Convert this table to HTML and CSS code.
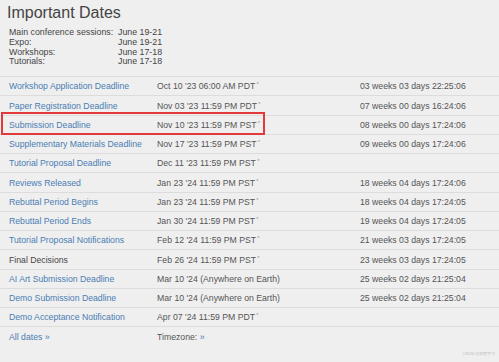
FILE: index.html
```html
<!DOCTYPE html>
<html>
<head>
<meta charset="utf-8">
<link rel="stylesheet" href="styles.css">
</head>
<body>
<h1 class="title">Important Dates</h1>
<div class="summary">
  <div class="sum-row"><span class="sum-label">Main conference sessions:</span><span>June 19-21</span></div>
  <div class="sum-row"><span class="sum-label">Expo:</span><span>June 19-21</span></div>
  <div class="sum-row"><span class="sum-label">Workshops:</span><span>June 17-18</span></div>
  <div class="sum-row"><span class="sum-label">Tutorials:</span><span>June 17-18</span></div>
</div>
<table class="dates">
  <tr><td class="name"><a>Workshop Application Deadline</a></td><td class="when">Oct 10 '23 06:00 AM PDT <sup>*</sup></td><td class="left">03 weeks 03 days 22:25:06</td></tr>
  <tr><td class="name"><a>Paper Registration Deadline</a></td><td class="when">Nov 03 '23 11:59 PM PDT <sup>*</sup></td><td class="left">07 weeks 00 days 16:24:06</td></tr>
  <tr class="marked"><td class="name"><a>Submission Deadline</a><span class="highlight"></span></td><td class="when">Nov 10 '23 11:59 PM PST <sup>*</sup></td><td class="left">08 weeks 00 days 17:24:06</td></tr>
  <tr><td class="name"><a>Supplementary Materials Deadline</a></td><td class="when">Nov 17 '23 11:59 PM PST <sup>*</sup></td><td class="left">09 weeks 00 days 17:24:06</td></tr>
  <tr><td class="name"><a>Tutorial Proposal Deadline</a></td><td class="when">Dec 11 '23 11:59 PM PST <sup>*</sup></td><td class="left"></td></tr>
  <tr><td class="name"><a>Reviews Released</a></td><td class="when">Jan 23 '24 11:59 PM PST <sup>*</sup></td><td class="left">18 weeks 04 days 17:24:06</td></tr>
  <tr><td class="name"><a>Rebuttal Period Begins</a></td><td class="when">Jan 23 '24 11:59 PM PST <sup>*</sup></td><td class="left">18 weeks 04 days 17:24:05</td></tr>
  <tr><td class="name"><a>Rebuttal Period Ends</a></td><td class="when">Jan 30 '24 11:59 PM PST <sup>*</sup></td><td class="left">19 weeks 04 days 17:24:05</td></tr>
  <tr><td class="name"><a>Tutorial Proposal Notifications</a></td><td class="when">Feb 12 '24 11:59 PM PST <sup>*</sup></td><td class="left">21 weeks 03 days 17:24:05</td></tr>
  <tr><td class="name plain">Final Decisions</td><td class="when">Feb 26 '24 11:59 PM PST <sup>*</sup></td><td class="left">23 weeks 03 days 17:24:05</td></tr>
  <tr><td class="name"><a>AI Art Submission Deadline</a></td><td class="when">Mar 10 '24 (Anywhere on Earth)</td><td class="left">25 weeks 02 days 21:25:04</td></tr>
  <tr><td class="name"><a>Demo Submission Deadline</a></td><td class="when">Mar 10 '24 (Anywhere on Earth)</td><td class="left">25 weeks 02 days 21:25:04</td></tr>
  <tr><td class="name"><a>Demo Acceptance Notification</a></td><td class="when">Apr 07 '24 11:59 PM PDT <sup>*</sup></td><td class="left"></td></tr>
  <tr class="foot"><td class="name"><a>All dates »</a></td><td class="when">Timezone: <a>»</a></td><td class="left"></td></tr>
</table>
<div class="watermark">CSDN @深度学习</div>
</body>
</html>
```
FILE: styles.css
```css
html, body {
  margin: 0;
  padding: 0;
  background: #efefef;
  width: 499px;
  height: 362px;
  overflow: hidden;
  font-family: "Liberation Sans", Arial, sans-serif;
  color: #555;
}
.title {
  margin: 0;
  padding: 2px 0 0 7px;
  font-size: 16px;
  font-weight: normal;
  color: #444;
  line-height: 21px;
}
.summary {
  padding: 5px 0 0 9px;
  font-size: 8.8px;
  line-height: 9.8px;
  color: #444;
}
.sum-row {
  display: flex;
}
.sum-label {
  width: 109px;
}
.dates {
  margin-top: 9px;
  width: 499px;
  border-collapse: collapse;
  font-size: 8.7px;
}
.dates td {
  border-top: 1px solid #dcdcdc;
  height: 18.25px;
  padding: 0;
  vertical-align: middle;
  white-space: nowrap;
}
.name {
  width: 148px;
  padding-left: 9px !important;
  position: relative;
}
.when {
  width: 203px;
  color: #555;
}
.left {
  color: #555;
}
a {
  color: #4a7db3;
  text-decoration: none;
}
.plain {
  color: #444;
}
sup {
  font-size: 6px;
  color: #999;
  vertical-align: 3px;
  margin-left: -1px;
}
.highlight {
  position: absolute;
  left: 1px;
  top: -4px;
  width: 260px;
  height: 19px;
  border: 2px solid #e23a3a;
}
.watermark {
  position: absolute;
  right: 4px;
  bottom: 6px;
  font-size: 4px;
  color: #bbb;
}
```
